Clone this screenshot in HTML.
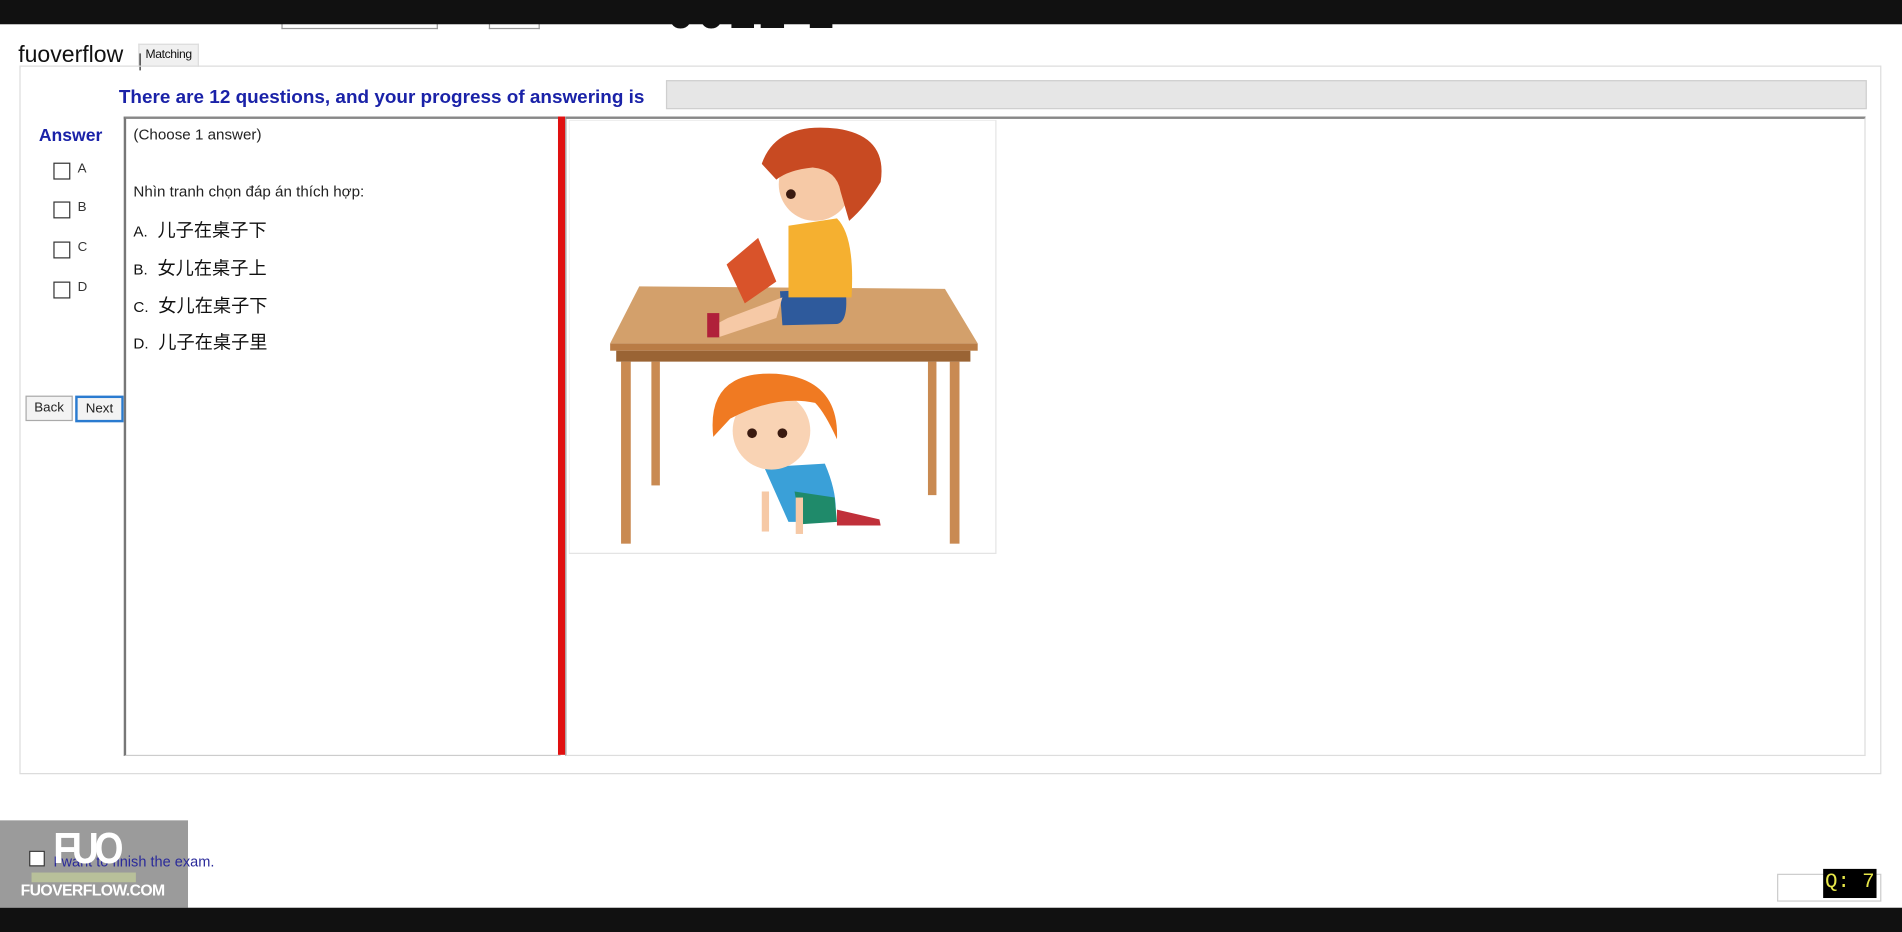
<!DOCTYPE html>
<html><head><meta charset="utf-8"><style>
html,body{margin:0;padding:0;background:#fff;overflow:hidden;width:1902px;height:932px}
#w{position:absolute;left:0;top:0;width:1568px;height:768px;transform:scale(1.21301,1.21354);transform-origin:0 0;font-family:"Liberation Sans","Noto Sans CJK SC",sans-serif;background:#fff;overflow:hidden}
.a{position:absolute}
.cb{position:absolute;width:12px;height:12px;border:1px solid #333;background:#fff}
.lb{position:absolute;font-size:11px;color:#333}
.opt{position:absolute;left:110px;font-size:15px;color:#111}
</style></head><body><div id="w">
<div class="a" style="left:232px;top:18px;width:127px;height:5px;border:1px solid #999;border-top:none;background:#fff"></div>
<div class="a" style="left:403px;top:18px;width:40px;height:5px;border:1px solid #999;border-top:none;background:#fff"></div>
<div class="a" style="left:550px;top:-10px;font-family:'Liberation Sans',sans-serif;font-size:40px;line-height:40px;font-weight:bold;color:#111;letter-spacing:3px">0012 1</div>
<div class="a" style="left:0;top:0;width:1568px;height:20px;background:#111"></div>
<div class="a" style="left:15px;top:35px;font-size:19px;color:#111">fuoverflow</div>
<div class="a" style="left:114px;top:36px;width:48px;height:18px;background:#f0f0f0;border:1px solid #ddd;border-bottom:none;font-size:10px;line-height:18px;text-align:center;color:#111;letter-spacing:-0.3px">Matching</div>
<div class="a" style="left:115px;top:44px;width:1px;height:14px;background:#222"></div>
<div class="a" style="left:16px;top:54px;width:1533px;height:582px;border:1px solid #dcdcdc"></div>
<div class="a" style="left:98px;top:72px;font-size:15.6px;font-weight:bold;color:#1a22a8">There are 12 questions, and your progress of answering is</div>
<div class="a" style="left:549px;top:66px;width:988px;height:22px;background:#e6e6e6;border:1px solid #cfcfcf"></div>
<div class="a" style="left:32px;top:104px;font-size:14.5px;font-weight:bold;color:#1a22a8">Answer</div>
<div class="cb" style="left:44px;top:134px"></div><div class="lb" style="left:64px;top:133px">A</div>
<div class="cb" style="left:44px;top:166px"></div><div class="lb" style="left:64px;top:165px">B</div>
<div class="cb" style="left:44px;top:199px"></div><div class="lb" style="left:64px;top:198px">C</div>
<div class="cb" style="left:44px;top:232px"></div><div class="lb" style="left:64px;top:231px">D</div>
<div class="a" style="left:21px;top:326px;width:37px;height:19px;border:1px solid #aaa;background:#f3f3f3;font-size:11px;line-height:19px;text-align:center;color:#222">Back</div>
<div class="a" style="left:62px;top:326px;width:36px;height:18px;border:2px solid #2a7bd0;background:#f3f3f3;font-size:11px;line-height:18px;text-align:center;color:#222">Next</div>
<div class="a" style="left:102px;top:96px;width:357px;height:524px;border:1px solid #ccc;border-left:2px solid #777;border-top:2px solid #888;background:#fff"></div>
<div class="a" style="left:110px;top:104px;font-size:12.5px;color:#222">(Choose 1 answer)</div>
<div class="a" style="left:110px;top:151px;font-size:12.5px;color:#222">Nhìn tranh chọn đáp án thích hợp:</div>
<div class="opt" style="top:179px"><span style="font-size:12.5px;margin-right:8px">A.</span>儿子在桌子下</div>
<div class="opt" style="top:210px"><span style="font-size:12.5px;margin-right:8px">B.</span>女儿在桌子上</div>
<div class="opt" style="top:241px"><span style="font-size:12.5px;margin-right:8px">C.</span>女儿在桌子下</div>
<div class="opt" style="top:271px"><span style="font-size:12.5px;margin-right:8px">D.</span>儿子在桌子里</div>
<div class="a" style="left:460px;top:96px;width:6px;height:526px;background:#e01010"></div>
<div class="a" style="left:466px;top:96px;width:1070px;height:524px;border:1px solid #ddd;border-top:2px solid #888;border-left:1px solid #999;background:#fff"></div>
<svg class="a" style="left:469px;top:99px" width="353" height="358" viewBox="469 99 353 358">
<rect x="469" y="99" width="352" height="357" fill="#fff" stroke="#e4e4e4"/>
<g fill="#c98a52">
<rect x="512" y="298" width="8" height="150"/><rect x="537" y="298" width="7" height="102"/>
<rect x="765" y="298" width="7" height="110"/><rect x="783" y="298" width="8" height="150"/></g>
<polygon points="527,236 779,238 806,283 503,283" fill="#d3a06b"/>
<rect x="503" y="283" width="303" height="6" fill="#b97c45"/>
<rect x="508" y="289" width="292" height="9" fill="#9a6434"/>
<path d="M643,240 L697,238 Q700,265 690,267 L645,268 Z" fill="#2e5a9c"/>
<path d="M645,245 L600,262 L585,270 L592,278 L640,262 Z" fill="#f6c9a6"/>
<rect x="583" y="258" width="10" height="20" fill="#b0203a"/>
<path d="M650,186 L690,180 Q705,195 702,245 L650,245 Z" fill="#f5b030"/>
<polygon points="599,218 625,196 640,232 614,250" fill="#d9532a"/>
<circle cx="672" cy="152" r="30" fill="#f6c9a6"/>
<path d="M628,135 Q640,100 690,106 Q732,112 726,150 Q714,170 700,182 L693,158 Q690,140 670,138 Q650,140 640,148 Z" fill="#c84a22"/>
<circle cx="652" cy="160" r="4" fill="#3a1a10"/>
<path d="M630,385 L680,382 Q692,410 688,430 L650,430 Z" fill="#3aa0d8"/>
<path d="M655,405 L688,410 L690,430 L660,432 Z" fill="#1f8a6a"/>
<path d="M690,420 L725,428 L726,433 L690,433 Z" fill="#c0303a"/>
<rect x="628" y="405" width="6" height="33" fill="#f6c9a6"/><rect x="656" y="410" width="6" height="30" fill="#f6c9a6"/>
<circle cx="636" cy="355" r="32" fill="#f9d3b4"/>
<path d="M588,360 Q582,305 640,308 Q692,312 690,362 Q680,340 672,332 Q640,325 602,345 Z" fill="#f07a22"/>
<circle cx="620" cy="357" r="4" fill="#3a1a10"/><circle cx="645" cy="357" r="4" fill="#3a1a10"/>
</svg>
<div class="a" style="left:0;top:676px;width:155px;height:72px;background:#9b9b9b"></div>
<div class="cb" style="left:24px;top:701px;width:11px;height:11px"></div>
<div class="a" style="left:44px;top:703px;font-size:12px;color:#2a2a9a">I want to finish the exam.</div>
<div class="a" style="left:44px;top:680px;font-size:36px;font-weight:bold;color:#fff;letter-spacing:-4px;line-height:38px;transform:scaleX(0.85);transform-origin:0 0">FUO</div>
<div class="a" style="left:26px;top:719px;width:86px;height:8px;background:#b8c09a"></div>
<div class="a" style="left:17px;top:726px;font-size:13px;font-weight:bold;color:#fff;letter-spacing:-0.5px">FUOVERFLOW.COM</div>
<div class="a" style="left:1465px;top:720px;width:84px;height:21px;border:1px solid #ccc;background:#fff"></div>
<div class="a" style="left:1503px;top:716px;width:44px;height:24px;background:#000;color:#e8e84a;font-size:17px;line-height:24px;text-align:center;font-family:'Liberation Mono',monospace">Q: 7</div>
<div class="a" style="left:0;top:748px;width:1568px;height:20px;background:#111"></div>
</div></body></html>
